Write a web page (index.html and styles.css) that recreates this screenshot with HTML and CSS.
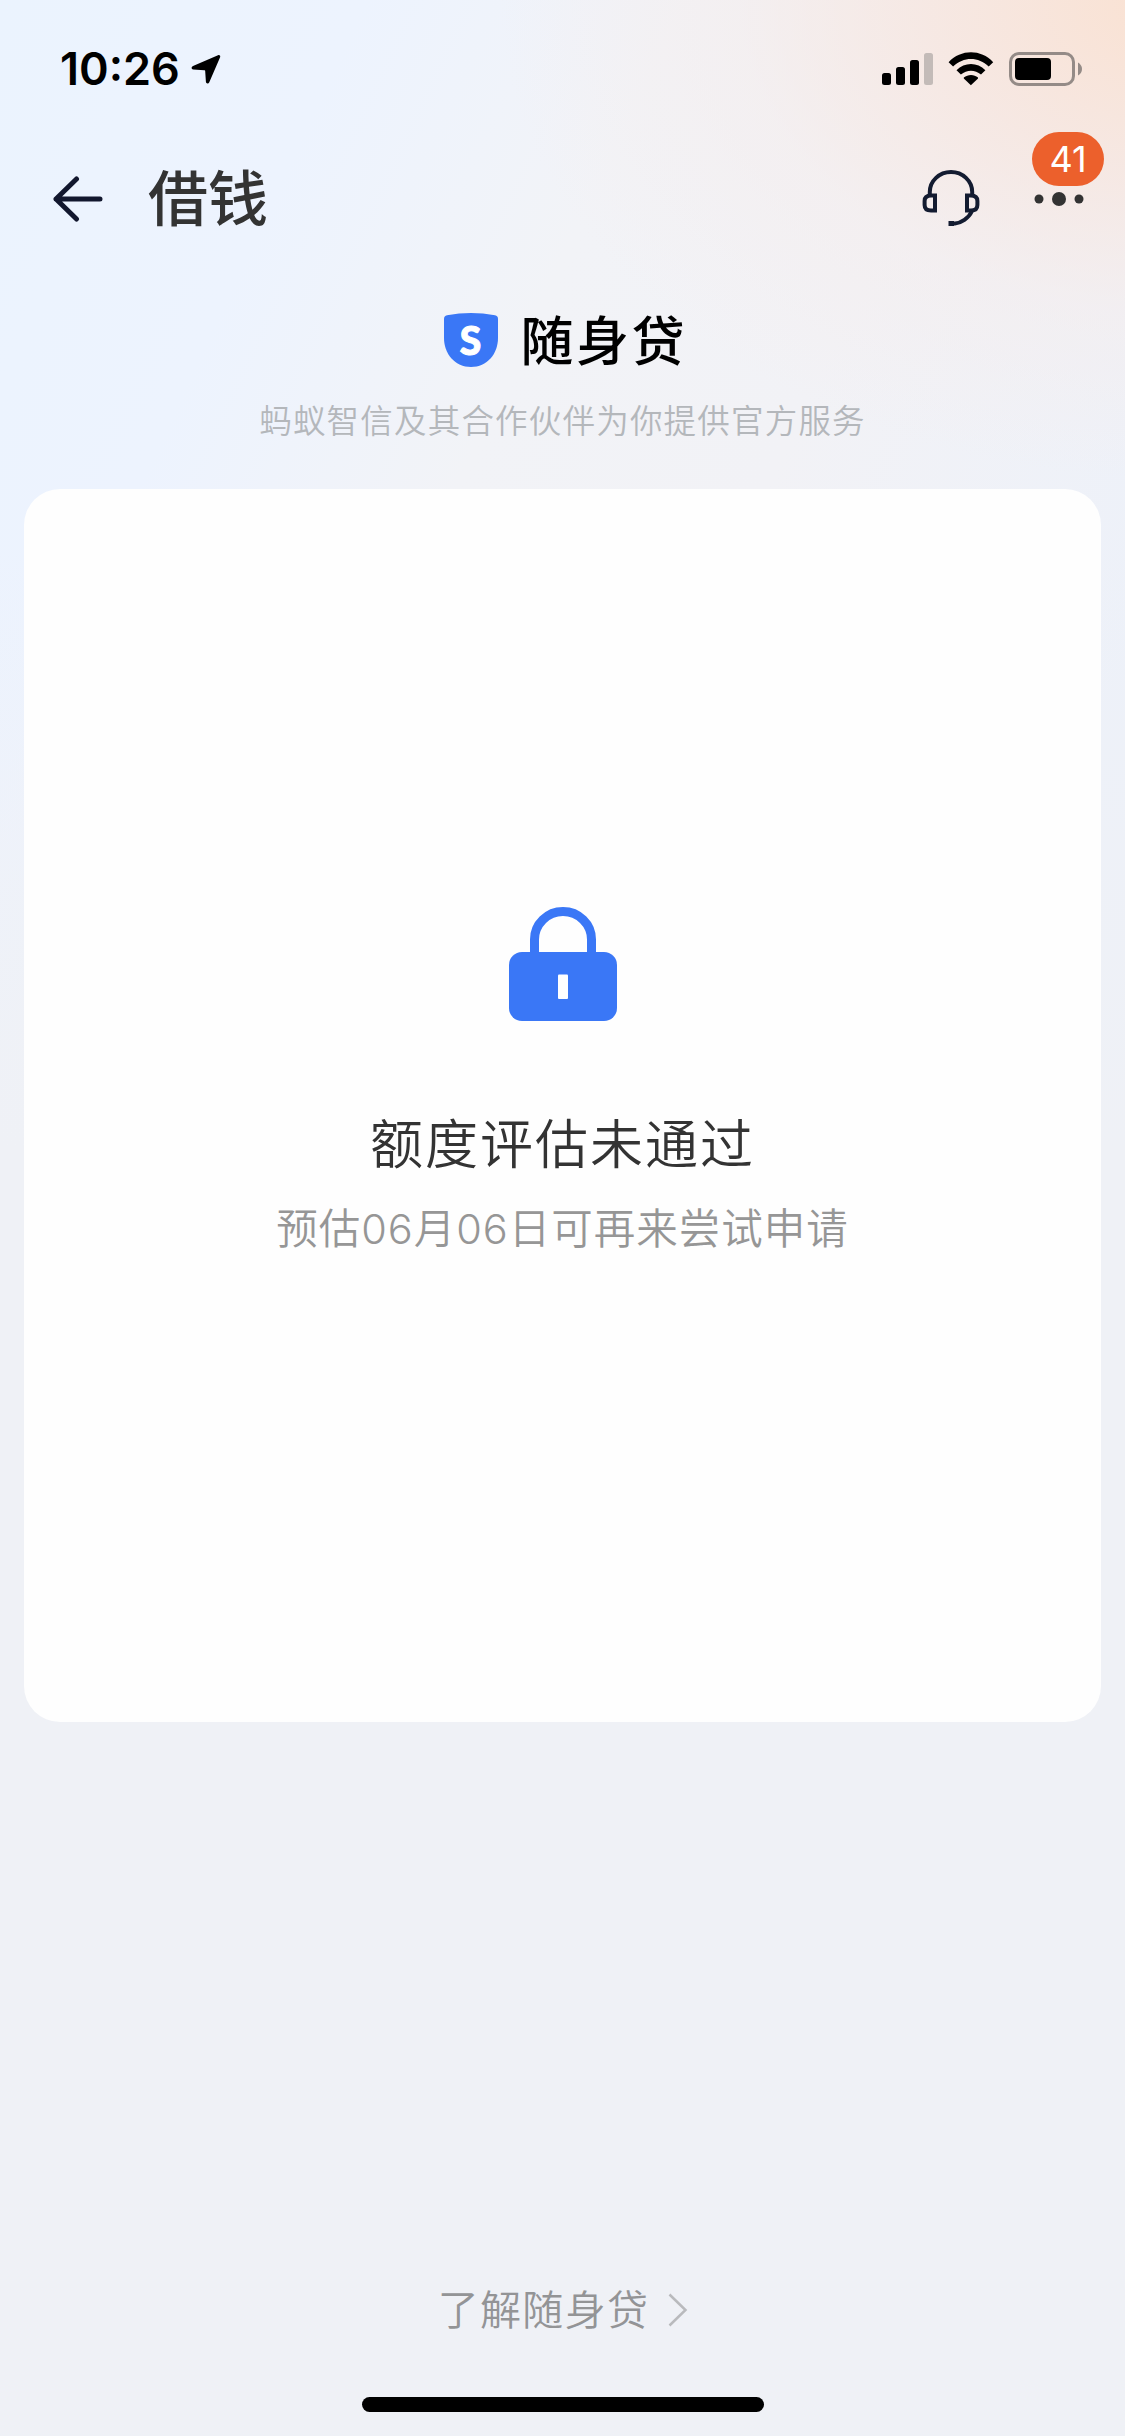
FILE: index.html
```html
<!DOCTYPE html>
<html lang="zh-CN">
<head>
<meta charset="utf-8">
<title>借钱</title>
<link rel="stylesheet" href="styles.css">
</head>
<body>
<div class="page">
  <div class="status-bar">
    <div class="status-left">
      <span class="time">10:26</span>
      <svg class="location" width="30" height="30" viewBox="0 0 30 30"><path d="M27 1.2L2 12C0 13 .3 15.400 2.200 15.500L13.300 16.300C14 16.400 14.200 16.700 14.200 17.300L14.900 27.800C15.100 30 17.500 30 18.300 28.200L29.100 3.200C29.700 1.700 28.500 .500 27 1.200Z"/></svg>
    </div>
    <div class="status-right">
      <svg width="52" height="34" viewBox="0 0 52 34"><rect x="0" y="21" width="9" height="12" rx="2.500"/><rect x="14" y="15" width="9" height="18" rx="2.500"/><rect x="28" y="8" width="9" height="25" rx="2.500"/><rect x="42" y="1" width="9" height="32" rx="2.500" fill="#c3bbb8"/></svg>
      <svg class="wifi" width="46" height="34" viewBox="0 0 46 34"><path d="M0.600 10.200C13-3 33-3 45.200 10.200L40.700 14.600C30.500 4.600 15.400 4.600 5.100 14.600Z"/><path d="M8.500 18.300C16.600 10 29.400 10 37.400 18.300L33 22.600C27 17.300 18.900 17.300 12.900 22.600Z"/><path d="M15.800 25.500C20 22 26 22 30 25.500V26.500L22.900 33.200L15.800 26.500Z"/></svg>
      <svg class="battery" width="74" height="34" viewBox="0 0 74 34"><rect x="1.500" y="1.500" width="63" height="31" rx="8.500" fill="none" stroke="#948b87" stroke-width="3"/><rect x="6" y="6" width="36" height="22" rx="4"/><path d="M69 10.500Q73 13 73 17T69 23.500Z" fill="#948b87"/></svg>
    </div>
  </div>

  <div class="nav">
    <svg class="back" width="50" height="46" viewBox="0 0 50 46" fill="none" stroke="#12172e" stroke-width="5" stroke-linecap="round" stroke-linejoin="round"><path d="M47 23H3M23.500 3L3 23L23.500 43"/></svg>
    <h1 class="nav-title">借钱</h1>
    <svg class="service" width="58" height="58" viewBox="0 0 58 58" fill="none" stroke="#131b30" stroke-width="4"><path d="M7.800 25.500V22A21.200 20 0 0 1 50.200 22V25.500"/><path d="M13 25.500V40.500H9Q2.600 40.500 2.600 35V31Q2.600 25.500 9 25.500Z"/><path d="M45 25.500V40.500H49Q55.400 40.500 55.400 35V31Q55.400 25.500 49 25.500Z"/><path d="M50 41C46.500 48.500 39 53 33 53.400H31"/><path d="M26.500 51H32V56H26.500Z" fill="#131b30" stroke="none"/></svg>
    <div class="more">
      <svg width="50" height="16" viewBox="0 0 50 16" fill="#333"><circle cx="5" cy="8" r="4.500"/><circle cx="25" cy="8" r="7"/><circle cx="45" cy="8" r="4.500"/></svg>
      <span class="badge">41</span>
    </div>
  </div>

  <div class="brand">
    <div class="shield">
      <svg width="54" height="54" viewBox="0 0 54 54"><path d="M0 6Q0 3 3 2.300Q27-2.300 51 2.300Q54 3 54 6V25C54 41 43 54 27 54S0 41 0 25Z" fill="#3a77f6"/></svg>
      <span class="shield-letter">S</span>
    </div>
    <span class="brand-name">随身贷</span>
  </div>
  <p class="tagline">蚂蚁智信及其合作伙伴为你提供官方服务</p>

  <div class="card">
    <svg width="108" height="114" viewBox="0 0 108 114"><path d="M25.500 47V32.500A28.500 28 0 0 1 82.500 32.500V47" fill="none" stroke="#3a77f6" stroke-width="9"/><rect y="45" width="108" height="69" rx="13" fill="#3a77f6"/><rect x="49" y="67.500" width="10" height="24.500" rx="1" fill="#fff"/></svg>
    <h2 class="result">额度评估未通过</h2>
    <p class="retry">预估06月06日可再来尝试申请</p>
  </div>

  <a class="learn">
    <span>了解随身贷</span>
    <svg width="20" height="34" viewBox="0 0 20 34" fill="none" stroke="#b9babd" stroke-width="2.500"><path d="M1.500 1.500L17.500 17L1.500 32.500"/></svg>
  </a>
  <div class="home-indicator"></div>
</div>
</body>
</html>
```
FILE: styles.css
```css
* { box-sizing: border-box; margin: 0; padding: 0; }

body {
  width: 1125px;
  font-family: Inter, "Noto Sans CJK SC", sans-serif;
  color: #333;
}

svg { display: block; flex: none; }

.page {
  height: 2436px;
  display: flex;
  flex-direction: column;
  overflow: hidden;
  background:
    radial-gradient(ellipse 680px 480px at 1180px 0, #fae1d1 0%, rgba(247, 230, 223, .85) 35%, rgba(245, 236, 235, .5) 65%, rgba(243, 240, 242, 0) 100%),
    linear-gradient(180deg, rgba(239, 241, 246, 0) 550px, #eff1f6 1150px),
    linear-gradient(115deg, #ebf3fe 0, #edf3fe 330px, #f2f3f7 620px, #f2f2f6 900px, #edf1f9 1300px);
}

.status-bar {
  height: 132px;
  padding: 0 42px 0 60px;
  display: flex;
  justify-content: space-between;
}

.status-left, .status-right { display: flex; }
.status-left { padding-top: 41px; }
.status-right { padding-top: 52px; }
.time {
  width: 131px;
  font-size: 45px;
  line-height: 56px;
  font-weight: 600;
  color: #000;
  white-space: nowrap;
}
.location { margin-top: 13px; }
.wifi { margin-left: 14px; }
.battery { margin-left: 15px; }

.nav {
  height: 134px;
  padding: 0 40px 0 53px;
  display: flex;
  align-items: center;
}
.nav-title {
  margin-left: 45px;
  font-size: 60px;
  line-height: 80px;
  font-weight: 500;
}
.service { margin-left: auto; margin-right: 54px; }
.more { position: relative; margin-right: 1px; }
.badge {
  position: absolute;
  left: -2px;
  top: -59px;
  width: 72px;
  height: 54px;
  border-radius: 27px;
  background: #ec602c;
  color: #fff;
  font-size: 36px;
  line-height: 54px;
  text-align: center;
}

.brand {
  height: 136px;
  padding: 38px 0 0 3px;
  display: flex;
  justify-content: center;
}
.shield { position: relative; margin: 9px 23px 0 0; height: 54px; }
.shield-letter {
  position: absolute;
  inset: 0;
  font: 900 39px/54px Lato, sans-serif;
  color: #fff;
  -webkit-text-stroke: 1px #fff;
  text-align: center;
}
.brand-name {
  font-size: 53px;
  line-height: 76px;
  font-weight: 500;
  letter-spacing: 2.400px;
  margin-right: -2.400px;
  color: #000;
}

.tagline {
  height: 87px;
  line-height: 40px;
  font-size: 32.500px;
  letter-spacing: 1.200px;
  font-weight: 350;
  text-align: center;
  color: #b4b7bb;
}

.card {
  height: 1233px;
  margin: 0 24px;
  padding-top: 418px;
  border-radius: 36px;
  background: #fefefe;
  display: flex;
  flex-direction: column;
  align-items: center;
}
.result {
  margin-top: 84px;
  font-size: 53px;
  line-height: 80px;
  font-weight: 350;
  letter-spacing: 2px;
}
.retry {
  margin-top: 14px;
  font-size: 41.500px;
  line-height: 60px;
  letter-spacing: 1px;
  font-weight: 350;
  color: #969696;
}

.learn {
  margin-top: 558px;
  height: 60px;
  padding-left: 1px;
  display: flex;
  align-items: center;
  justify-content: center;
  gap: 19px;
  font-size: 41px;
  line-height: 60px;
  font-weight: 350;
  letter-spacing: 1.300px;
  color: #939496;
}

.home-indicator {
  width: 402px;
  height: 15px;
  margin: 57px auto 0;
  border-radius: 8px;
  background: #000;
}
```
